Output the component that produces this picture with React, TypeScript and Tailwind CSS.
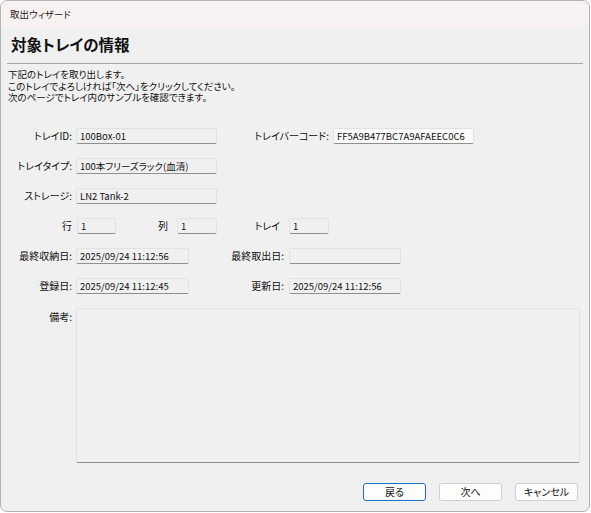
import React from 'react';

const font = "font-['Noto_Sans_CJK_JP','Noto_Sans',sans-serif] [font-feature-settings:'palt']";

function Field({ value, className = '', editable = false }: { value?: string; className?: string; editable?: boolean }) {
  return (
    <div
      className={`h-[16px] shrink-0 overflow-hidden whitespace-nowrap rounded-[2px] border border-[#e2e2e2] border-b-[#8f8f8f] pl-[3px] text-[9.5px] leading-[14px] text-[#111] ${
        editable ? 'bg-[#fbfbfb]' : 'bg-[#f0f0f0]'
      } ${className}`}
    >
      {value}
    </div>
  );
}

function Label({ text, className = '' }: { text: string; className?: string }) {
  return <div className={`shrink-0 text-right text-[10px] leading-[16px] text-[#111] ${className}`}>{text}</div>;
}

function WizardButton({ text, primary = false }: { text: string; primary?: boolean }) {
  return (
    <button
      className={`h-[18px] w-[63px] rounded-[3px] border bg-[#fdfdfd] text-[10px] leading-[16px] text-[#111] ${
        primary ? 'border-[#1f6fc4]' : 'border-[#d0d0d0]'
      }`}
    >
      {text}
    </button>
  );
}

export default function App() {
  return (
    <div className={`h-[513px] w-[591px] bg-white ${font}`}>
      <div className="flex h-[512px] w-[590px] flex-col overflow-hidden rounded-[7px] border border-[#b4b4b4] bg-[#f0f0f0]">
        {/* title bar */}
        <div className="flex h-[26px] shrink-0 items-center bg-[#f7f1f2] pl-[9px] text-[9.5px] text-[#222]">取出ウィザード</div>

        {/* header */}
        <div className="flex h-[36px] shrink-0 items-center pl-[10px] text-[15.5px] font-semibold text-[#111]">対象トレイの情報</div>
        <div className="mx-[6px] h-px shrink-0 bg-[#a6a6a6]" />

        {/* description */}
        <div className="mt-[5px] pl-[7px] text-[9.5px] leading-[11.5px] text-[#111]">
          <div>下記のトレイを取り出します。</div>
          <div>このトレイでよろしければ「次へ」をクリックしてください。</div>
          <div>次のページでトレイ内のサンプルを確認できます。</div>
        </div>

        {/* fields */}
        <div className="mt-[24px] flex flex-col gap-[14px]">
          <div className="flex h-[16px]">
            <Label text="トレイID:" className="w-[71px]" />
            <Field value="100Box-01" className="ml-[4px] w-[141px]" />
            <Label text="トレイバーコード:" className="w-[112px]" />
            <Field value="FF5A9B477BC7A9AFAEEC0C6" editable className="ml-[4px] w-[141px]" />
          </div>
          <div className="flex h-[16px]">
            <Label text="トレイタイプ:" className="w-[71px]" />
            <Field value="100本フリーズラック(血清)" className="ml-[4px] w-[141px]" />
          </div>
          <div className="flex h-[16px]">
            <Label text="ストレージ:" className="w-[71px]" />
            <Field value="LN2 Tank-2" className="ml-[4px] w-[141px]" />
          </div>
          <div className="flex h-[16px]">
            <Label text="行" className="w-[71px]" />
            <Field value="1" className="ml-[5px] w-[39px]" />
            <Label text="列" className="w-[52px]" />
            <Field value="1" className="ml-[9px] w-[40px]" />
            <Label text="トレイ" className="w-[63px]" />
            <Field value="1" className="ml-[9px] w-[40px]" />
          </div>
          <div className="flex h-[16px]">
            <Label text="最終収納日:" className="w-[71px]" />
            <Field value="2025/09/24 11:12:56" className="ml-[4px] w-[113px]" />
            <Label text="最終取出日:" className="w-[95px]" />
            <Field className="ml-[5px] w-[112px]" />
          </div>
          <div className="flex h-[16px]">
            <Label text="登録日:" className="w-[71px]" />
            <Field value="2025/09/24 11:12:45" className="ml-[4px] w-[113px]" />
            <Label text="更新日:" className="w-[95px]" />
            <Field value="2025/09/24 11:12:56" className="ml-[5px] w-[112px]" />
          </div>
          <div className="flex">
            <Label text="備考:" className="w-[71px] pt-[1px]" />
            <div className="ml-[4px] h-[155px] w-[504px] rounded-[2px] border border-[#e2e2e2] border-b-[#8f8f8f] bg-[#f0f0f0]" />
          </div>
        </div>

        {/* buttons */}
        <div className="mt-[20px] flex justify-end gap-[13px] pr-[11px]">
          <WizardButton text="戻る" primary />
          <WizardButton text="次へ" />
          <WizardButton text="キャンセル" />
        </div>
      </div>
    </div>
  );
}
